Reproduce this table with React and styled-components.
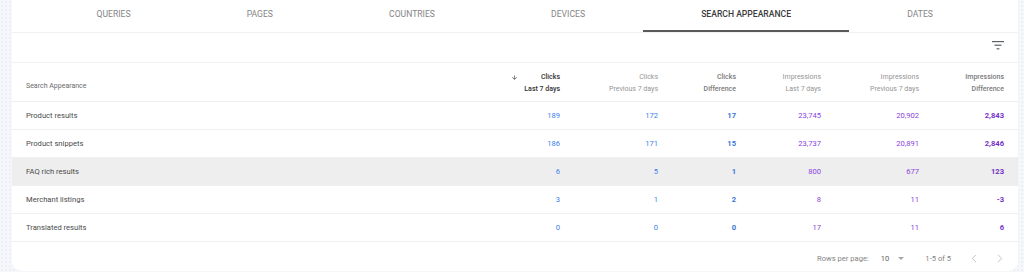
import React from 'react'
import styled, { createGlobalStyle, css } from 'styled-components';

const GlobalStyle = createGlobalStyle`
    html, body {
        margin: 0;
        padding: 0;
    }
    body {
        font-family: Roboto, 'Liberation Sans', sans-serif;
        background-color: #f5f7fb;
        background-image: radial-gradient(circle, #eaeef5 0.6px, transparent 1px);
        background-size: 4px 4px;
    }
`;

const tabs = ['Queries', 'Pages', 'Countries', 'Devices', 'Search appearance', 'Dates']

const columns = [
    { top: 'Clicks', bottom: 'Last 7 days', sorted: true },
    { top: 'Clicks', bottom: 'Previous 7 days' },
    { top: 'Clicks', bottom: 'Difference', strong: true },
    { top: 'Impressions', bottom: 'Last 7 days' },
    { top: 'Impressions', bottom: 'Previous 7 days' },
    { top: 'Impressions', bottom: 'Difference', strong: true },
]

const rows = [
    { name: 'Product results', values: ['189', '172', '17', '23,745', '20,902', '2,843'] },
    { name: 'Product snippets', values: ['186', '171', '15', '23,737', '20,891', '2,846'] },
    { name: 'FAQ rich results', values: ['6', '5', '1', '800', '677', '123'], hovered: true },
    { name: 'Merchant listings', values: ['3', '1', '2', '8', '11', '-3'] },
    { name: 'Translated results', values: ['0', '0', '0', '17', '11', '6'] },
]

// kind of value per column: clicks / clicks diff / impressions / impressions diff
const kinds = ['clicks', 'clicks', 'clicksDiff', 'imps', 'imps', 'impsDiff']

const FilterIcon = () => (
    <svg width="12" height="9" viewBox="0 0 12 9">
        <rect x="0" y="0" width="12" height="1.2" fill="#5f6368" />
        <rect x="2.5" y="3.6" width="7" height="1.2" fill="#5f6368" />
        <rect x="4.6" y="7.2" width="2.8" height="1.2" fill="#5f6368" />
    </svg>
)

const ArrowDown = () => (
    <svg width="7" height="7" viewBox="0 0 24 24">
        <path d="M20 12l-1.41-1.41L13 16.17V4h-2v12.17l-5.58-5.59L4 12l8 8 8-8z" fill="#444" />
    </svg>
)

const Chevron = ({ dir }) => (
    <svg width="6" height="9" viewBox="0 0 6 9">
        <path
            d={dir === 'left' ? 'M5 0.8 L1.3 4.5 L5 8.2' : 'M1 0.8 L4.7 4.5 L1 8.2'}
            fill="none"
            stroke="#c4c4c4"
            strokeWidth="1"
        />
    </svg>
)

const App = () => {
    return (
        <Page>
            <GlobalStyle />
            <Card>
                <TabBar>
                    {tabs.map(tab => (
                        <Tab key={tab} active={tab === 'Search appearance'}>{tab}</Tab>
                    ))}
                </TabBar>
                <Toolbar>
                    <FilterButton aria-label="Filter rows"><FilterIcon /></FilterButton>
                </Toolbar>
                <HeaderRow>
                    <NameHeader>Search Appearance</NameHeader>
                    {columns.map((col, i) => (
                        <HeaderCell key={i} sorted={col.sorted} strong={col.strong}>
                            {col.sorted && <SortIcon><ArrowDown /></SortIcon>}
                            <HeaderText>
                                <span>{col.top}</span>
                                <span>{col.bottom}</span>
                            </HeaderText>
                        </HeaderCell>
                    ))}
                </HeaderRow>
                {rows.map(row => (
                    <Row key={row.name} hovered={row.hovered}>
                        <NameCell>{row.name}</NameCell>
                        {row.values.map((v, i) => (
                            <ValueCell key={i} kind={kinds[i]}>{v}</ValueCell>
                        ))}
                    </Row>
                ))}
                <Footer>
                    <FooterLabel>Rows per page:</FooterLabel>
                    <RowsSelect>
                        10
                        <Caret />
                    </RowsSelect>
                    <PageRange>1-5 of 5</PageRange>
                    <PagerButton aria-label="Previous page"><Chevron dir="left" /></PagerButton>
                    <PagerButton aria-label="Next page"><Chevron dir="right" /></PagerButton>
                </Footer>
            </Card>
        </Page>
    )
}

export default App

const Page = styled.div`
    height: 272px;
    box-sizing: border-box;
    padding: 0 6px 0 12px;
    overflow: hidden;
`;

const Card = styled.div`
    background: #ffffff;
    border-radius: 0 0 10px 10px;
    overflow: hidden;
`;

const TabBar = styled.div`
    display: flex;
    height: 32px;
    padding: 0 27px 0 26.5px;
    border-bottom: 1px solid #f1f1f1;
`;

const Tab = styled.div`
    flex: 1 1 auto;
    display: flex;
    justify-content: center;
    box-sizing: border-box;
    padding-top: 8.5px;
    font-size: 8.6px;
    line-height: 10px;
    text-transform: uppercase;
    color: #858585;
    white-space: nowrap;
    border-bottom: 2px solid transparent;
    ${props => props.active && css`
        color: #3c3c3c;
        font-weight: 500;
        border-bottom-color: #5a5a5a;
    `}
`;

const Toolbar = styled.div`
    display: flex;
    justify-content: flex-end;
    align-items: center;
    height: 30px;
    box-sizing: border-box;
    padding: 0 14px 4px 0;
    border-bottom: 1px solid #f1f1f1;
`;

const FilterButton = styled.div`
    display: flex;
    align-items: center;
`;

const gridColumns = `464px 98px 98px 78px 85px 98px 85px`;

const HeaderRow = styled.div`
    display: grid;
    grid-template-columns: ${gridColumns};
    height: 38px;
    border-bottom: 1px solid #eeeeee;
`;

const NameHeader = styled.div`
    align-self: center;
    padding: 7px 0 0 14px;
    font-size: 7px;
    color: #6a6a6a;
`;

const HeaderCell = styled.div`
    display: flex;
    justify-content: flex-end;
    align-items: center;
    gap: 6px;
    padding: 1px 14px 0 0;
    font-size: 7px;
    color: #959595;
    ${props => props.strong && css`
        color: #7a7a7a;
        font-weight: 500;
    `}
    ${props => props.sorted && css`
        color: #333333;
        font-weight: 500;
    `}
`;

const HeaderText = styled.div`
    display: flex;
    flex-direction: column;
    align-items: flex-end;
    line-height: 12px;
`;

const SortIcon = styled.span`
    display: flex;
    align-self: flex-start;
    margin-top: 10px;
`;

const Row = styled.div`
    display: grid;
    grid-template-columns: ${gridColumns};
    align-items: center;
    height: 27px;
    border-bottom: 1px solid #f0f0f0;
    background: ${props => props.hovered ? '#eeeeee' : '#ffffff'};
`;

const NameCell = styled.div`
    padding-left: 14px;
    font-size: 7.6px;
    color: #4a4a4a;
`;

const valueColors = {
    clicks: '#3d7ff0',
    clicksDiff: '#3a74d8',
    imps: '#8c44e0',
    impsDiff: '#7430c8',
}

const ValueCell = styled.div`
    padding-right: 14px;
    text-align: right;
    font-size: 7.6px;
    color: ${props => valueColors[props.kind]};
    font-weight: ${props => props.kind.endsWith('Diff') ? 700 : 400};
`;

const Footer = styled.div`
    display: flex;
    justify-content: flex-end;
    align-items: center;
    height: 29px;
    box-sizing: border-box;
    padding: 4px 15px 0 0;
    font-size: 7.6px;
    color: #858585;
`;

const FooterLabel = styled.span`
    margin-right: 12px;
`;

const RowsSelect = styled.span`
    display: flex;
    align-items: center;
    gap: 9px;
    color: #666;
    margin-right: 21px;
`;

const Caret = styled.span`
    width: 0;
    height: 0;
    border-left: 3px solid transparent;
    border-right: 3px solid transparent;
    border-top: 3px solid #a8a8a8;
`;

const PageRange = styled.span`
    margin-right: 20px;
`;

const PagerButton = styled.span`
    display: flex;
    align-items: center;
    width: 6px;
    & + & {
        margin-left: 20px;
    }
`;
